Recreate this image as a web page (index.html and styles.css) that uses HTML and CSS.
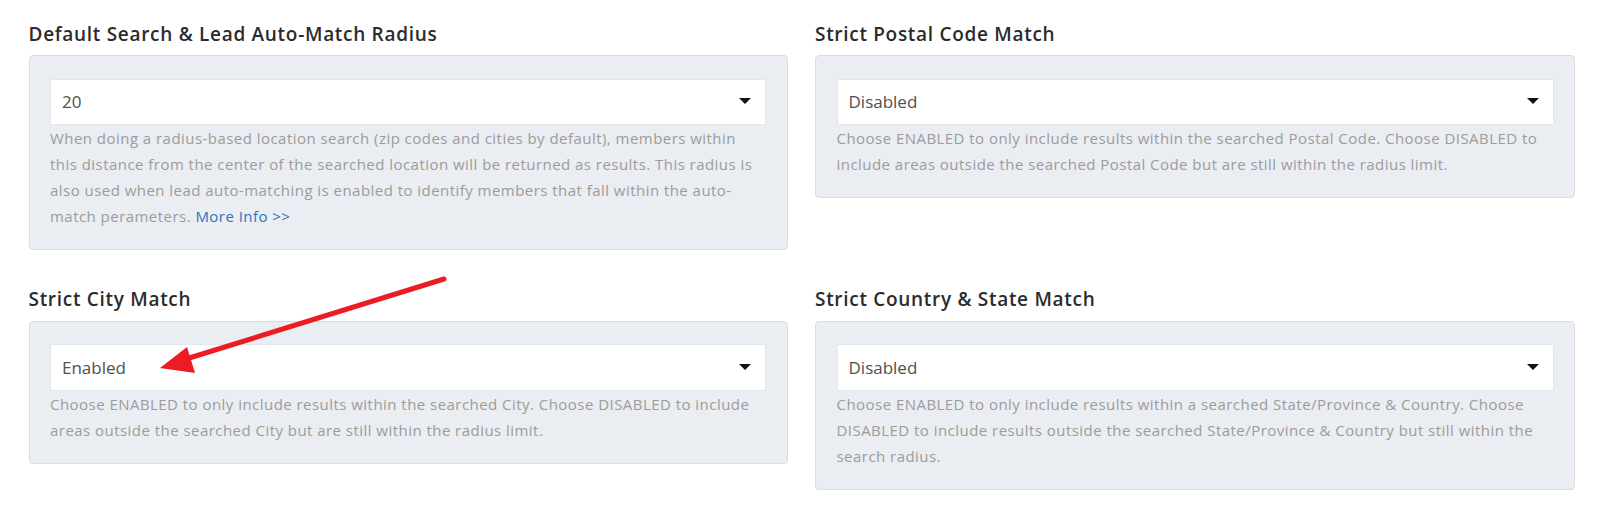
FILE: index.html
```html
<!DOCTYPE html>
<html>
<head>
<meta charset="utf-8">
<link rel="stylesheet" href="styles.css">
</head>
<body>
<div class="page">
  <div class="grid">
    <section class="field">
      <h3 class="label">Default Search &amp; Lead Auto-Match Radius</h3>
      <div class="panel">
        <div class="select"><span>20</span><i class="caret"></i></div>
        <p class="help">When doing a radius-based location search (zip codes and cities by default), members within<br>this distance from the center of the searched location will be returned as results. This radius is<br>also used when lead auto-matching is enabled to identify members that fall within the auto-<br>match perameters. <a href="#">More Info &gt;&gt;</a></p>
      </div>
    </section>
    <section class="field">
      <h3 class="label">Strict Postal Code Match</h3>
      <div class="panel">
        <div class="select"><span>Disabled</span><i class="caret"></i></div>
        <p class="help">Choose ENABLED to only include results within the searched Postal Code. Choose DISABLED to<br>include areas outside the searched Postal Code but are still within the radius limit.</p>
      </div>
    </section>
    <section class="field">
      <h3 class="label">Strict City Match</h3>
      <div class="panel">
        <div class="select"><span>Enabled</span><i class="caret"></i></div>
        <p class="help">Choose ENABLED to only include results within the searched City. Choose DISABLED to include<br>areas outside the searched City but are still within the radius limit.</p>
      </div>
    </section>
    <section class="field">
      <h3 class="label">Strict Country &amp; State Match</h3>
      <div class="panel">
        <div class="select"><span>Disabled</span><i class="caret"></i></div>
        <p class="help">Choose ENABLED to only include results within a searched State/Province &amp; Country. Choose<br>DISABLED to include results outside the searched State/Province &amp; Country but still within the<br>search radius.</p>
      </div>
    </section>
  </div>
  <svg class="annot" width="1608" height="509" viewBox="0 0 1608 509">
    <line x1="444" y1="279" x2="186" y2="359" stroke="#ec1c24" stroke-width="5" stroke-linecap="round"/>
    <polygon points="160,368 187,347 195,373" fill="#ec1c24"/>
  </svg>
</div>
</body>
</html>
```
FILE: styles.css
```css
* { box-sizing: border-box; }
html, body { margin: 0; padding: 0; background: #fff; }
body { font-family: "Open Sans", Lato, sans-serif; }
.page { position: relative; width: 1608px; height: 509px; padding: 21.5px 0 0 28.5px; }
.grid {
  display: grid;
  grid-template-columns: 759px 760px;
  column-gap: 27.5px;
  row-gap: 37px;
  align-items: start;
}
.label {
  margin: 0 0 8.5px 0;
  font-size: 19px;
  line-height: 25px;
  font-weight: 600;
  color: #2b2b2b;
  letter-spacing: 0.7px;
}
.panel {
  background: #eaedf1;
  border: 1px solid #d9dde2;
  border-radius: 4px;
  padding: 22.5px 20.5px 20px 20.5px;
}
.select {
  display: flex;
  align-items: center;
  justify-content: space-between;
  height: 46.5px;
  background: #fff;
  border: 1px solid #e3e6ea;
  padding: 0 14px 0 11px;
  font-size: 17px;
  color: #505050;
}
.caret {
  width: 0; height: 0;
  border-left: 6px solid transparent;
  border-right: 6px solid transparent;
  border-top: 6.5px solid #111;
  margin-top: -1px;
}
.help {
  margin: 0;
  font-size: 15px;
  line-height: 26px;
  color: #9c9c9c;
  white-space: nowrap;
  letter-spacing: 0.46px;
}
.help a { color: #2a75c2; text-decoration: none; }
.annot { position: absolute; left: 0; top: 0; pointer-events: none; }
```
